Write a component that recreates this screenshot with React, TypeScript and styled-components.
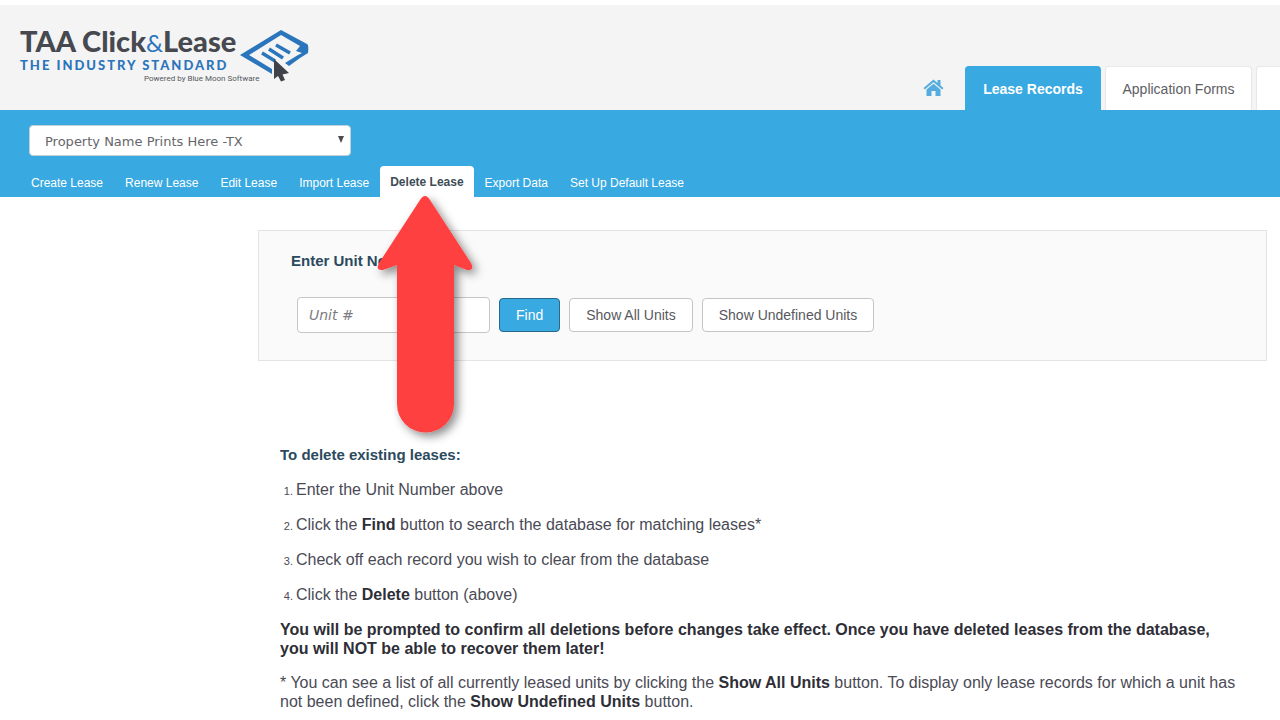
import React from "react";
import styled, { createGlobalStyle } from "styled-components";

const blue = "#38a9e1";
const sans = `"Liberation Sans", Arial, sans-serif`;
const wide = `"DejaVu Sans", Verdana, sans-serif`;

const GlobalStyle = createGlobalStyle`
  * { box-sizing: border-box; }
  body { margin: 0; background: #fff; font-family: ${sans}; color: #4a4a55; overflow-x: hidden; }
  a { color: inherit; text-decoration: none; }
  button, input, select { font: inherit; }
`;

const Header = styled.header`
  display: flex;
  justify-content: space-between;
  height: 105px;
  margin-top: 5px;
  padding-left: 20px;
  background: #f4f4f4;
  overflow: hidden;
`;

const Brand = styled.a`
  display: flex;
  align-items: flex-start;
  padding-top: 22px;
  font-family: Lato, ${sans};
  white-space: nowrap;
`;

const BrandText = styled.span`
  display: flex;
  flex-direction: column;
  width: 219px;
`;

const BrandName = styled.span`
  font-size: 29px;
  line-height: 28px;
  font-weight: 900;
  color: #46494f;
`;

const Ampersand = styled.span`
  font-size: 24px;
  font-weight: 400;
  color: #2a75bb;
`;

const Slogan = styled.span`
  font-size: 13px;
  line-height: 16px;
  font-weight: 900;
  letter-spacing: 2px;
  color: #2a75bb;
`;

const Powered = styled.span`
  padding-left: 124px;
  font-family: Roboto, sans-serif;
  font-size: 8px;
  line-height: 12px;
  color: #55585e;
`;

const LogoMark = styled.svg`
  width: 70px;
  height: 54px;
  margin-top: 2px;
`;

const MainNav = styled.nav`
  display: flex;
  align-items: flex-end;
  font-size: 14px;
`;

const HomeLink = styled.a`
  display: flex;
  align-items: center;
  height: 44px;
  margin-right: 21px;
  color: #55acdf;
`;

const MainTab = styled.a<{ $active?: boolean }>`
  display: flex;
  align-items: center;
  justify-content: center;
  width: ${(p) => (p.$active ? 136 : 147)}px;
  height: 44px;
  margin-right: 4px;
  border: 1px solid ${(p) => (p.$active ? blue : "#e8e8e8")};
  border-bottom: 0;
  border-radius: 4px 4px 0 0;
  background: ${(p) => (p.$active ? blue : "#fff")};
  color: ${(p) => (p.$active ? "#fff" : "#606064")};
  font-weight: ${(p) => (p.$active ? 700 : 400)};
`;

const NextTab = styled.span`
  width: 24px;
  height: 44px;
  border: 1px solid #e8e8e8;
  border-width: 1px 0 0 1px;
  border-radius: 4px 0 0 0;
  background: #fff;
`;

const Bar = styled.div`
  padding: 15px 20px 0;
  background: ${blue};
`;

const SelectWrap = styled.div`
  position: relative;
  width: 322px;
  margin-left: 9px;
`;

const PropertySelect = styled.select`
  appearance: none;
  display: block;
  width: 100%;
  height: 31px;
  padding: 1px 14px 0 15px;
  border: 1px solid #c3cfd6;
  border-radius: 4px;
  background: #fff;
  color: #66666a;
  font-family: ${wide};
  font-size: 13px;
`;

const SelectArrow = styled.svg`
  position: absolute;
  right: 7px;
  top: 11px;
  width: 6px;
  height: 7px;
  pointer-events: none;
`;

const SubNav = styled.nav`
  display: flex;
  margin-top: 10px;
  font-size: 12px;
`;

const SubLink = styled.a<{ $active?: boolean }>`
  position: relative;
  height: 31px;
  padding: 0 ${(p) => (p.$active ? 10 : 11)}px;
  border-radius: 4px 4px 0 0;
  line-height: ${(p) => (p.$active ? 32 : 34)}px;
  white-space: nowrap;
  background: ${(p) => (p.$active ? "#fff" : "transparent")};
  color: ${(p) => (p.$active ? "#3f4b57" : "#fff")};
  font-weight: ${(p) => (p.$active ? 700 : 400)};
`;

const Pointer = styled.svg`
  position: absolute;
  z-index: 2;
  left: 50%;
  top: 20px;
  width: 120px;
  height: 270px;
  margin-left: -61px;
  pointer-events: none;
`;

const Main = styled.main`
  margin: 33px 13px 0 258px;
`;

const Panel = styled.form`
  height: 131px;
  padding: 21px 32px;
  border: 1px solid #e4e4e4;
  background: #fafafa;
`;

const PanelLabel = styled.label`
  display: block;
  font-size: 15px;
  line-height: 18px;
  font-weight: 700;
  color: #2b4a5e;
`;

const Controls = styled.div`
  display: flex;
  align-items: center;
  gap: 9px;
  margin: 27px 0 0 6px;
`;

const UnitInput = styled.input`
  width: 193px;
  height: 36px;
  padding: 0 11px;
  border: 1px solid #c6c6c6;
  border-radius: 4px;
  background: #fff;
  font-family: ${wide};
  font-size: 14px;
  &::placeholder {
    color: #7c7c80;
    font-style: italic;
  }
`;

const Button = styled.button<{ $primary?: boolean }>`
  height: 34px;
  padding: 0 16px;
  border: 1px solid ${(p) => (p.$primary ? "#27688d" : "#c4c4c4")};
  border-radius: 4px;
  background: ${(p) => (p.$primary ? blue : "#fff")};
  color: ${(p) => (p.$primary ? "#fff" : "#58585d")};
  font-size: 14px;
  white-space: nowrap;
`;

const Help = styled.section`
  padding: 84px 29px 0 22px;
  font-size: 16px;
  line-height: 19px;
  p {
    margin: 0 0 15px;
  }
  strong {
    color: #2e2e36;
  }
`;

const HelpTitle = styled.h2`
  margin: 0 0 16px;
  font-size: 15px;
  line-height: 19px;
  color: #2b4a5e;
`;

const Steps = styled.ol`
  margin: 0 0 16px;
  padding-left: 16px;
  li + li {
    margin-top: 16px;
  }
  li::marker {
    font-size: 11px;
  }
`;

const links = [
  "Create Lease",
  "Renew Lease",
  "Edit Lease",
  "Import Lease",
  "Delete Lease",
  "Export Data",
  "Set Up Default Lease",
];

export default function App() {
  return (
    <>
      <GlobalStyle />
      <Header>
        <Brand href="#">
          <BrandText>
            <BrandName>
              TAA Click<Ampersand>&amp;</Ampersand>Lease
            </BrandName>
            <Slogan>THE INDUSTRY STANDARD</Slogan>
            <Powered>Powered by Blue Moon Software</Powered>
          </BrandText>
          <LogoMark viewBox="0 0 70 54" aria-hidden="true">
            <path
              d="M1 26 L42 1 L68 15 Q70 16 69 24 L61 29 L50 37 L46 34 L59 26 L63 24 L57 22 L61 17 L42 6 L10 26 L33 40 V45 Z"
              fill="#2a75bb"
            />
            <path
              d="M23 24 L36 32 M30 20 L44 29 M37 16 L51 24"
              fill="none"
              stroke="#2a75bb"
              strokeWidth="3.500"
            />
            <path d="M35 30 L50 44 L43.500 45.500 L46 51 L42 52.500 L39 47 L35 50 Z" fill="#3f4249" />
          </LogoMark>
        </Brand>
        <MainNav>
          <HomeLink href="#" aria-label="Home">
            <svg width="21" height="18" viewBox="0 0 21 18" fill="currentColor">
              <path d="M10.500 0.500 L0.500 9 L1.800 10.500 L10.500 3.200 L19.200 10.500 L20.500 9 L17.500 6.400 V1 H14.500 V3.900 Z" />
              <path d="M10.500 4.700 L3.500 10.500 V17 H8.500 V12 H12.500 V17 H17.500 V10.500 Z" />
            </svg>
          </HomeLink>
          <MainTab href="#" $active>
            Lease Records
          </MainTab>
          <MainTab href="#">Application Forms</MainTab>
          <NextTab />
        </MainNav>
      </Header>
      <Bar>
        <SelectWrap>
          <PropertySelect aria-label="Property">
            <option>Property Name Prints Here -TX</option>
          </PropertySelect>
          <SelectArrow viewBox="0 0 6 7" aria-hidden="true">
            <path d="M0 0 H6 L3 7 Z" fill="#4c4c4c" />
          </SelectArrow>
        </SelectWrap>
        <SubNav>
          {links.map((name) => {
            const active = name === "Delete Lease";
            return (
              <SubLink key={name} href="#" $active={active}>
                {name}
                {active && (
                  <Pointer viewBox="0 0 120 270" aria-hidden="true">
                    <defs>
                      <filter id="shadow" x="-30%" y="-10%" width="160%" height="120%">
                        <feDropShadow dx="4" dy="4" stdDeviation="5" floodOpacity="0.45" />
                      </filter>
                    </defs>
                    <path
                      d="M54 14 Q59 6 64 14 L105 77 Q109 85 101 84 L88 79 V218 A28.500 28.500 0 0 1 31 218 V79 L17 84 Q9 85 13 77 Z"
                      fill="#fe4141"
                      filter="url(#shadow)"
                    />
                  </Pointer>
                )}
              </SubLink>
            );
          })}
        </SubNav>
      </Bar>
      <Main>
        <Panel onSubmit={(e) => e.preventDefault()}>
          <PanelLabel htmlFor="unit">Enter Unit No</PanelLabel>
          <Controls>
            <UnitInput id="unit" placeholder="Unit #" />
            <Button $primary>Find</Button>
            <Button type="button">Show All Units</Button>
            <Button type="button">Show Undefined Units</Button>
          </Controls>
        </Panel>
        <Help>
          <HelpTitle>To delete existing leases:</HelpTitle>
          <Steps>
            <li>Enter the Unit Number above</li>
            <li>
              Click the <strong>Find</strong> button to search the database for matching leases*
            </li>
            <li>Check off each record you wish to clear from the database</li>
            <li>
              Click the <strong>Delete</strong> button (above)
            </li>
          </Steps>
          <p>
            <strong>
              You will be prompted to confirm all deletions before changes take effect. Once you
              have deleted leases from the database, you will NOT be able to recover them later!
            </strong>
          </p>
          <p>
            * You can see a list of all currently leased units by clicking the{" "}
            <strong>Show All Units</strong> button. To display only lease records for which a unit
            has not been defined, click the <strong>Show Undefined Units</strong> button.
          </p>
        </Help>
      </Main>
    </>
  );
}
